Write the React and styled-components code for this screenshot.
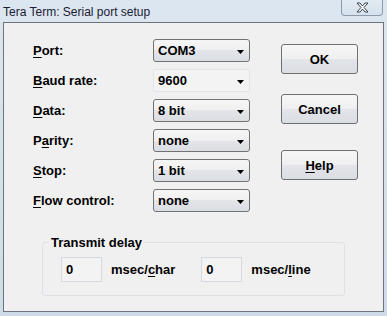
import React from "react";
import styled, { createGlobalStyle } from "styled-components";

const Global = createGlobalStyle`
  html, body { margin: 0; padding: 0; background: #d6e2ee; }
  * { box-sizing: border-box; }
`;

const Window = styled.div`
  width: 387px;
  height: 316px;
  display: flex;
  flex-direction: column;
  padding: 0 3px 4px 3px;
  background: linear-gradient(#dbe6f1, #cfdbe8);
  overflow: hidden;
`;

const TitleBar = styled.div`
  height: 22px;
  display: flex;
  justify-content: space-between;
  align-items: flex-start;
`;

const Title = styled.div`
  font-family: "Liberation Sans", Arial, sans-serif;
  font-size: 12px;
  line-height: 12px;
  padding-top: 6px;
  color: #1c2030;
`;

const CloseButton = styled.div`
  width: 42px;
  height: 16px;
  margin-right: 1px;
  border: 1px solid #8d9aa9;
  border-top: none;
  border-radius: 0 0 4px 4px;
  background: linear-gradient(#e3ebf3, #d6e1ec);
  display: flex;
  align-items: center;
  justify-content: center;
`;

const Client = styled.div`
  flex: 1;
  border: 1px solid #6d747c;
  background: #f0f0f0;
  padding: 16px 0 0 29px;
  font-family: "Liberation Sans", Arial, sans-serif;
  font-weight: bold;
  font-size: 13px;
  color: #000;
`;

const TopRow = styled.div`
  display: flex;
  align-items: flex-start;
  gap: 31px;
`;

const FieldGrid = styled.div`
  display: grid;
  grid-template-columns: 120px 97px;
  grid-auto-rows: 23px;
  row-gap: 7px;
`;

const Label = styled.label`
  display: flex;
  align-items: center;
  white-space: pre;
`;

const Key = styled.span`
  text-decoration: underline;
  text-decoration-thickness: 1px;
  text-underline-offset: 2px;
`;

const Select = styled.div`
  display: flex;
  align-items: center;
  justify-content: space-between;
  padding: 0 5px 0 4px;
  border: 1px solid ${(p) => (p.$editable ? "#dfe4ea" : "#727272")};
  border-radius: ${(p) => (p.$editable ? "1px" : "3px")};
  background: ${(p) =>
    p.$editable
      ? "#f3f3f3"
      : "linear-gradient(#f6f6f6, #efefef 50%, #e3e5e9 50%, #dadde2)"};
`;

const Arrow = () => (
  <svg width="7" height="4" viewBox="0 0 7 4" style={{ marginTop: 2 }}>
    <path d="M0 0h7L3.5 4z" fill="#000" />
  </svg>
);

const ButtonColumn = styled.div`
  display: flex;
  flex-direction: column;
  padding-top: 5px;
`;

const Button = styled.button`
  width: 77px;
  height: 30px;
  margin-top: ${(p) => p.$gap || 0}px;
  border: 1px solid #707070;
  border-radius: 3px;
  background: linear-gradient(#f6f6f6, #efefef 50%, #e3e5e9 50%, #dadde2);
  font-family: "Liberation Sans", Arial, sans-serif;
  font-weight: bold;
  font-size: 13px;
  color: #000;
  padding: 0;
`;

const Group = styled.fieldset`
  width: 303px;
  margin: 23px 0 0 9px;
  padding: 7px 0 0 18px;
  height: 61px;
  border: 1px solid #dde1e6;
  border-radius: 3px;
`;

const Legend = styled.legend`
  padding: 0 2px;
  margin-left: -12px;
`;

const DelayRow = styled.div`
  display: flex;
  align-items: center;
`;

const NumberBox = styled.div`
  width: 41px;
  height: 25px;
  border: 1px solid #d5dae0;
  background: #f3f3f3;
  padding-left: 4px;
  display: flex;
  align-items: center;
`;

const Unit = styled.span`
  margin: 0 ${(p) => p.$after || 0}px 0 9px;
`;

const fields = [
  { pre: "", key: "P", post: "ort:", value: "COM3" },
  { pre: "", key: "B", post: "aud rate:", value: "9600", editable: true },
  { pre: "", key: "D", post: "ata:", value: "8 bit" },
  { pre: "P", key: "a", post: "rity:", value: "none" },
  { pre: "", key: "S", post: "top:", value: "1 bit" },
  { pre: "", key: "F", post: "low control:", value: "none" },
];

export default function App() {
  return (
    <>
      <Global />
      <Window>
        <TitleBar>
          <Title>Tera Term: Serial port setup</Title>
          <CloseButton>
            <svg width="13" height="11" viewBox="0 0 13 11">
              <path
                d="M1 1h3l2.5 3 2.5-3h3l-4 4.5 4 4.5h-3l-2.5-3-2.5 3h-3l4-4.5z"
                fill="#fff"
                stroke="#3b4450"
                strokeWidth="1"
                strokeLinejoin="round"
              />
            </svg>
          </CloseButton>
        </TitleBar>
        <Client>
          <TopRow>
            <FieldGrid>
              {fields.map((f) => (
                <React.Fragment key={f.value + f.post}>
                  <Label>
                    {f.pre}
                    <Key>{f.key}</Key>
                    {f.post}
                  </Label>
                  <Select $editable={f.editable}>
                    <span>{f.value}</span>
                    <Arrow />
                  </Select>
                </React.Fragment>
              ))}
            </FieldGrid>
            <ButtonColumn>
              <Button>OK</Button>
              <Button $gap={20}>Cancel</Button>
              <Button $gap={26}>
                <Key>H</Key>elp
              </Button>
            </ButtonColumn>
          </TopRow>
          <Group>
            <Legend>Transmit delay</Legend>
            <DelayRow>
              <NumberBox>0</NumberBox>
              <Unit $after={26}>
                msec/<Key>c</Key>har
              </Unit>
              <NumberBox>0</NumberBox>
              <Unit>
                msec/<Key>l</Key>ine
              </Unit>
            </DelayRow>
          </Group>
        </Client>
      </Window>
    </>
  );
}
